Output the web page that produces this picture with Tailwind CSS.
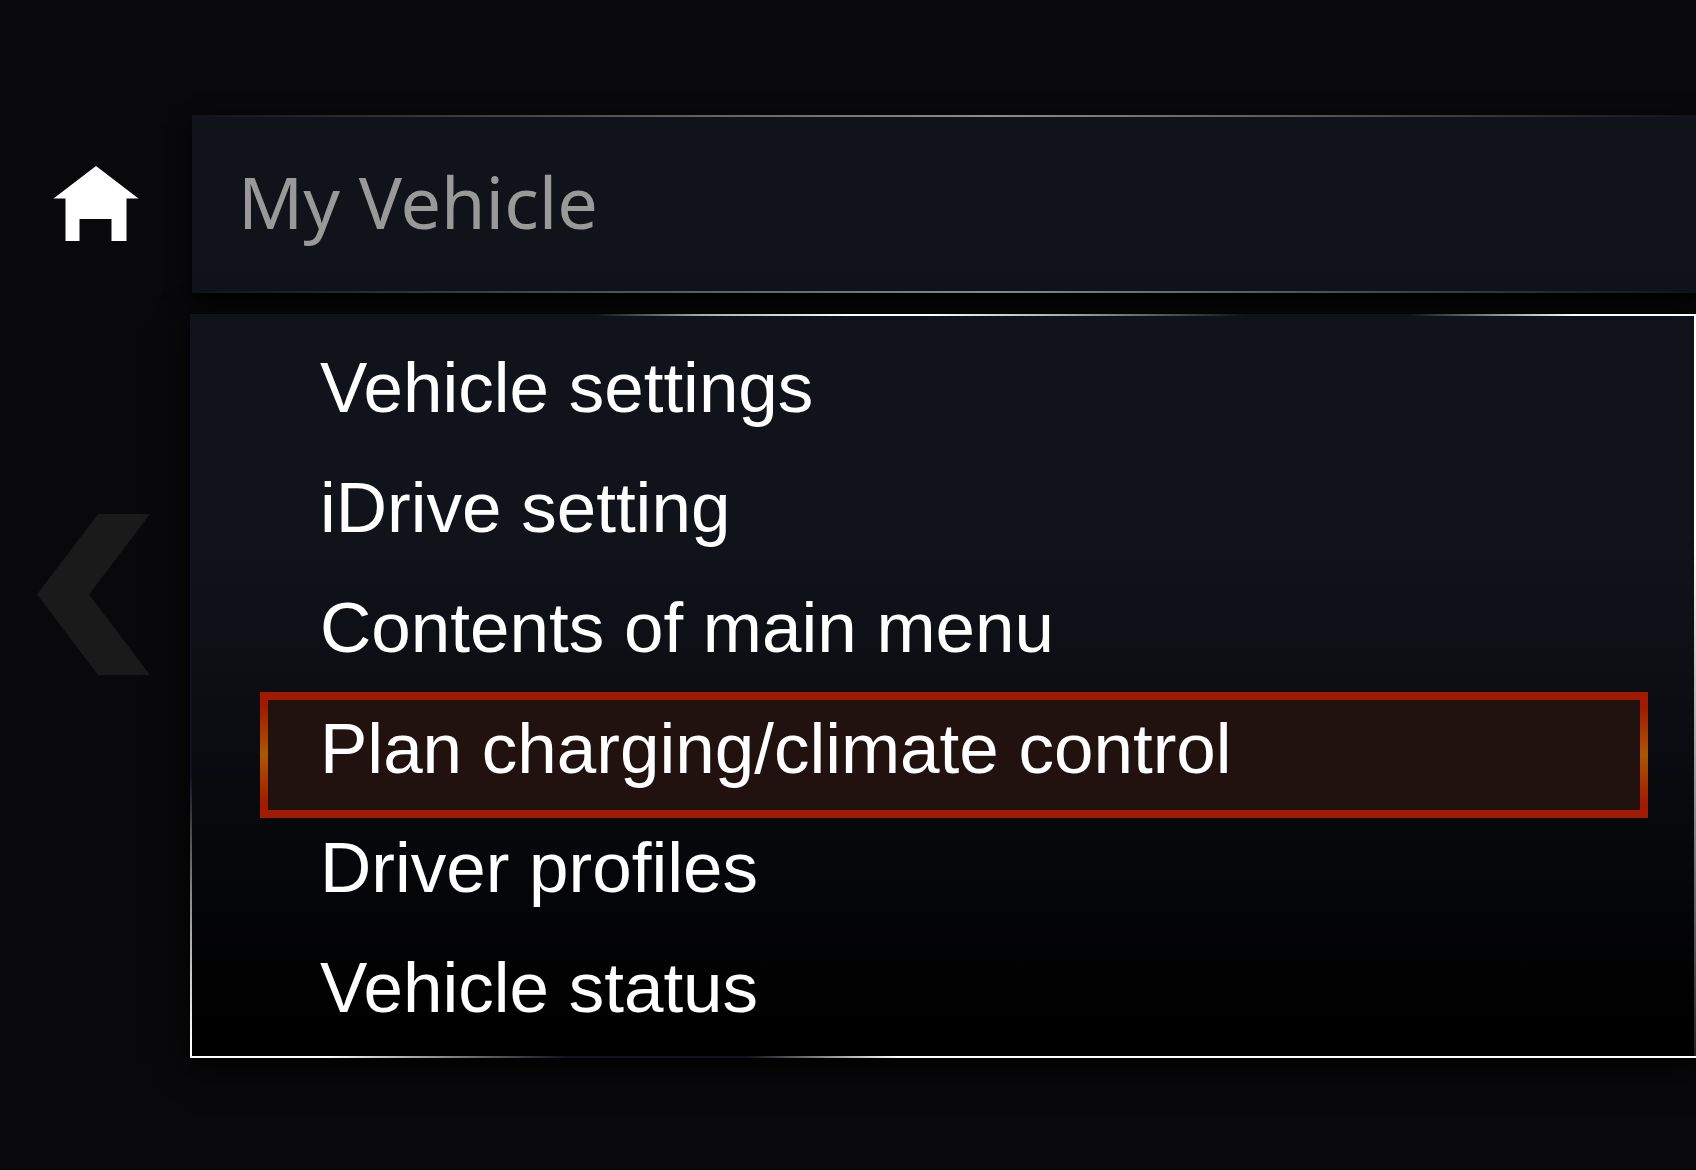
<!DOCTYPE html>
<html lang="en">
<head>
<meta charset="utf-8">
<meta name="viewport" content="width=device-width, initial-scale=1">
<title>My Vehicle</title>
<script src="https://cdn.jsdelivr.net/npm/@tailwindcss/browser@4"></script>
</head>
<body class="min-h-screen bg-[#09090b] font-['Liberation_Sans',Arial,sans-serif] text-white overflow-x-hidden">
<div class="flex min-h-screen pt-[115px]">
  <nav class="flex w-[190px] shrink-0 flex-col" aria-label="Navigation">
    <a href="#" aria-label="Home" class="ml-[53px] mt-[51px] block">
      <svg class="h-[76px] w-[86px]" viewBox="0 0 86 76" fill="#fff"><path d="M43 0L85.500 32.500H73.500V75H58.500V53H26.500V75H12.500V32.500H.5Z"/></svg>
    </a>
    <button type="button" aria-label="Back" class="ml-[37px] mt-[272px] w-[113px]">
      <svg class="h-[161px] w-[113px]" viewBox="0 0 113 161" fill="#1a1a1a"><path d="M61 0H113L52 80.500L113 161H61L0 80.500Z"/></svg>
    </button>
  </nav>
  <main class="flex min-w-0 flex-1 flex-col gap-[21px]">
    <header class="relative ml-[2px] h-[178px] bg-[#10131a] pl-[46px] shadow-[0_8px_20px_0_#000]">
      <h1 class="pt-[26px] font-['Noto_Sans','Open_Sans',sans-serif] text-[72px] leading-[120px] text-[#999]">My Vehicle</h1>
      <span class="absolute inset-x-0 top-0 h-[2px] bg-[linear-gradient(90deg,transparent,#8d8d8d_53%,transparent)]"></span>
      <span class="absolute inset-x-0 bottom-0 h-[2px] bg-[linear-gradient(90deg,transparent,#8d8d8d_53%,transparent)]"></span>
    </header>
    <section class="relative h-[744px] bg-[linear-gradient(#10131a_30%,#0c0e13_50%,#07080c_70%,#000_95%)] pt-[21px] shadow-[0_8px_32px_0_#000]">
      <ul class="text-[71px] leading-[106px]">
        <li class="h-[120px] pl-[130px]"><a href="#" class="block">Vehicle settings</a></li>
        <li class="h-[120px] pl-[130px]"><a href="#" class="block">iDrive setting</a></li>
        <li class="h-[120px] pl-[130px]"><a href="#" class="block">Contents of main menu</a></li>
        <li class="flow-root h-[120px] pl-[70px] pr-[48px]"><a href="#" aria-current="true" class="-mt-[3px] block h-[126px] border-8 [border-image:linear-gradient(#a11b00,#a11b00_12%,#ad5606_50%,#a11b00_88%,#a11b00)_8] bg-[#22120f] pl-[52px] leading-[98px]">Plan charging/climate control</a></li>
        <li class="h-[120px] pl-[130px]"><a href="#" class="block">Driver profiles</a></li>
        <li class="h-[120px] pl-[130px]"><a href="#" class="block">Vehicle status</a></li>
      </ul>
      <span class="absolute inset-y-0 left-0 w-[2px] bg-[linear-gradient(#10131a_62%,#888_78%,#fff_98%)]"></span>
      <span class="absolute inset-y-0 right-0 w-[2px] bg-[linear-gradient(#fff_30%,#ccc_46%,#222_100%)]"></span>
      <span class="absolute inset-x-0 top-0 h-[2px] bg-[linear-gradient(90deg,transparent_27%,#aaa_34%,#fff_44%,#fff_49%,#aaa_58%,transparent_70%,transparent_81%,#fff_92%)]"></span>
      <span class="absolute inset-x-0 bottom-0 h-[2px] bg-[linear-gradient(90deg,#fff_9%,#888_17%,#10131a_25%,#10131a_37%,#888_42%,#fff_47%)]"></span>
    </section>
  </main>
</div>
</body>
</html>
